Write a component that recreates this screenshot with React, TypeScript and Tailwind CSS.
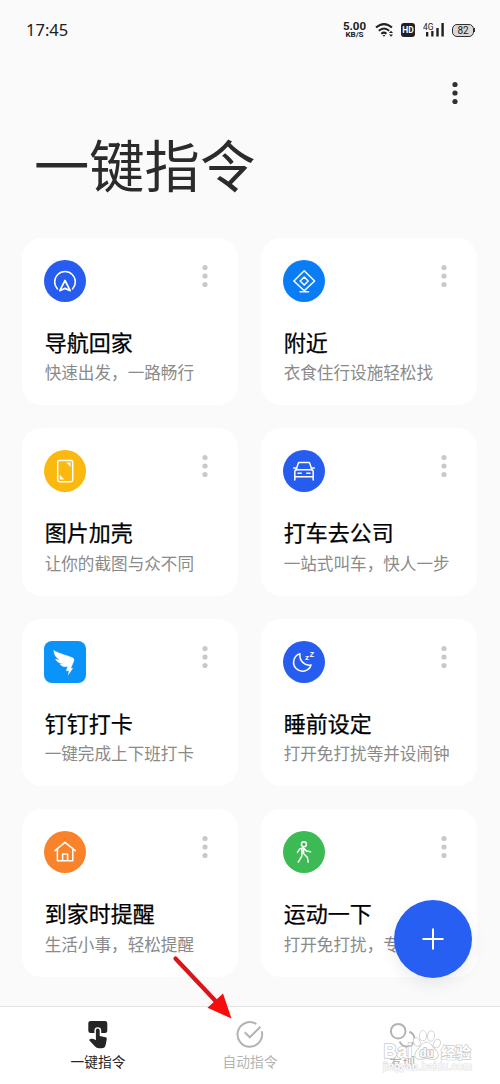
import clsx from 'clsx'
import { type FC, memo, type ReactNode } from 'react'

interface ICommand {
  readonly title: string
  readonly description: string
  readonly color: string
  readonly icon: ReactNode
}

const commands: ICommand[] = [
  {
    title: '导航回家',
    description: '快速出发，一路畅行',
    color: 'bg-[#275cf0] rounded-full',
    icon: (
      <>
        <path d="M13.5 28.9A10.3 10.3 0 1 1 28.5 28.9"/>
        <path d="M21 20.5L26.2 30.7L21 28.4L15.8 30.7Z" strokeWidth="1.7"/>
      </>
    )
  },
  {
    title: '附近',
    description: '衣食住行设施轻松找',
    color: 'bg-[#0a7cf5] rounded-full',
    icon: (
      <>
        <path d="M21.2 10.7L31.6 21L21.2 30.8L10.9 21Z"/>
        <path d="M21.2 17L25.2 21L21.2 25L17.2 21Z"/>
        <path d="M17 31.7H25.6"/>
      </>
    )
  },
  {
    title: '图片加壳',
    description: '让你的截图与众不同',
    color: 'bg-[#fbb80f] rounded-full',
    icon: (
      <>
        <rect x="13.7" y="10.5" width="15" height="21.2" rx="1.6"/>
        <path d="M22.8 12.8H26.4V16.5ZM16 25.5V29.2H19.6Z" fill="currentColor" strokeWidth="0.4"/>
      </>
    )
  },
  {
    title: '打车去公司',
    description: '一站式叫车，快人一步',
    color: 'bg-[#275cf0] rounded-full',
    icon: (
      <>
        <path d="M13.2 19.8L15.2 13.4Q15.5 12.6 16.4 12.6H25.6Q26.5 12.6 26.8 13.4L28.8 19.8"/>
        <path d="M10.6 17.9H13.4M28.6 17.9H31.4M11.8 30V21.4Q11.8 19.8 13.4 19.8H28.6Q30.2 19.8 30.2 21.4V30M11.8 26.8H30.2"/>
        <path d="M15 23.2H18.3M23.7 23.2H27"/>
      </>
    )
  },
  {
    title: '钉钉打卡',
    description: '一键完成上下班打卡',
    color: 'bg-[#0a94fa] rounded-[8px]',
    icon: (
      <path
        d="M9.8 9.6C15 12.8 22 13.8 28.2 16.6C30 17.4 30.4 18.6 29.8 20.2L26.8 27.2H28.8L24.2 34L25 29.8H22.2L23.6 25.6C20.5 26 17.8 25.6 15.8 22.9L19.4 22.8C15.5 22.2 12.9 21 11.4 18.2L16 18.9C12.2 17 9.9 14 9.8 9.6Z"
        fill="currentColor"
        strokeWidth="0.3"
      />
    )
  },
  {
    title: '睡前设定',
    description: '打开免打扰等并设闹钟',
    color: 'bg-[#275cf0] rounded-full',
    icon: (
      <>
        <path d="M17 12.8A8.9 8.9 0 1 0 28 24C21.7 25.3 16 19.5 17 12.8Z"/>
        <g fill="currentColor" stroke="none" fontFamily="Liberation Sans, sans-serif" fontWeight="700">
          <text x="22" y="19.4" fontSize="8">z</text>
          <text x="26.6" y="16.2" fontSize="7.6">Z</text>
        </g>
      </>
    )
  },
  {
    title: '到家时提醒',
    description: '生活小事，轻松提醒',
    color: 'bg-[#f8832b] rounded-full',
    icon: (
      <path d="M10.9 19.6L21 11.3L31.3 19.6M13.4 18V29.8H28.8V18M18.6 29.8V23H23.6V29.8"/>
    )
  },
  {
    title: '运动一下',
    description: '打开免打扰，专注运动',
    color: 'bg-[#3cba54] rounded-full',
    icon: (
      <>
        <circle cx="20.9" cy="13.2" r="2.5"/>
        <path d="M14.4 21.4L16.8 17.9L20.4 16.7L23.4 20L27.6 20.8M20.6 17V22.6L24.4 26.6L25.2 31.2M19 18.5L18.8 25.2L15.3 31"/>
      </>
    )
  }
]

const tabs = [ '一键指令', '自动指令', '发现' ]

const tabIcons: ReactNode[] = [
  <svg className="h-7 w-5" viewBox="0 0 20 28" fill="currentColor">
    <path d="M2.6 0H17A2.3 2.3 0 0 1 19.3 2.3V9.7A2.3 2.3 0 0 1 17 12H13.2V9.7A3.4 3.4 0 0 0 6.4 9.7V12H2.6A2.3 2.3 0 0 1 .3 9.7V2.3A2.3 2.3 0 0 1 2.6 0Z"/>
    <path d="M7.9 9.5A1.9 1.9 0 0 1 11.7 9.5V15.1L17.6 16.2Q19 16.5 18.8 17.9L17.7 23.8Q17 27.3 13.6 27.3H11Q8.6 27.3 6.8 25.3L1 19Q3.5 16.6 7.9 19.3Z"/>
  </svg>,
  <svg className="size-7" viewBox="0 0 28 28" fill="none" stroke="currentColor" strokeWidth="2">
    <path d="M20.3 3A12.3 12.3 0 1 0 25.7 10.2M8.7 11.2L13.8 16.3L24.5 5.8"/>
  </svg>,
  <svg className="h-7 w-7" viewBox="0 0 28 28" fill="none" stroke="currentColor" strokeWidth="2">
    <circle cx="10.2" cy="10.2" r="7.3"/>
    <path d="M21.3 10.7A7.6 7.6 0 1 1 11.7 20.5"/>
  </svg>
]

const StatusBar: FC = memo(() => (
  <header className="flex h-[60px] items-center justify-between pr-[25px] pl-[26px] text-[#202020]">
    <span className="pt-px font-['Noto_Sans'] text-[16.5px] leading-none">17:45</span>
    <div className="flex items-center">
      <div className="mr-[9px] flex w-[23px] flex-col items-center font-['Roboto'] font-bold">
        <span className="text-[11.5px] leading-[10px]">5.00</span>
        <span className="text-[8px] leading-[8px]">KB/S</span>
      </div>
      <svg className="mr-[7px] h-4 w-[19px]" viewBox="0 0 19 16" fill="none" stroke="currentColor" strokeWidth="2">
        <path d="M1 5.6Q9 -1.4 17 5.6M3.8 8.8Q9 4.2 14.2 8.8M6.3 11.7Q9 9.6 11.5 11.7"/>
        <path d="M7.6 13H10.4L9 14.8ZM14 11L16 8.8L18 11ZM14 12.5L16 14.7L18 12.5Z" fill="currentColor" stroke="none"/>
      </svg>
      <span className="mr-[8px] flex h-[14px] w-[14px] items-center justify-center rounded-[3px] bg-[#202020] font-['Roboto'] text-[8.5px] font-bold text-white">
        HD
      </span>
      <svg className="mr-[8px] h-4 w-[21px]" viewBox="0 0 21 16" fill="currentColor">
        <text x="0" y="7.8" fontSize="8.5" textLength="10.5" lengthAdjust="spacingAndGlyphs" fontFamily="Roboto, sans-serif">4G</text>
        <path d="M3 10H5.3V14.5H3ZM8.2 9H10.5V14.5H8.2ZM13.3 6H15.7V14.5H13.3ZM18.4 1H20.8V14.5H18.4Z"/>
      </svg>
      <div className="flex items-center">
        <span className="flex h-[13px] w-[22px] items-center justify-center rounded-[5px] border-[1.5px] border-[#303030] bg-[#d9d9d9] font-['Roboto'] text-[10px]">
          82
        </span>
        <span className="h-1 w-px bg-[#303030]"/>
      </div>
    </div>
  </header>
))

const MoreDots: FC<{ readonly className: string }> = ({ className }) => (
  <button className={className}>
    <svg className="h-6 w-1.5" viewBox="0 0 6 24" fill="currentColor">
      <circle cx="3" cy="3.5" r="2.6"/>
      <circle cx="3" cy="12" r="2.6"/>
      <circle cx="3" cy="20.5" r="2.6"/>
    </svg>
  </button>
)

const CommandCard: FC<ICommand> = memo((props) => (
  <article className="h-[167.5px] rounded-[20px] bg-white px-[22px] pt-[22px]">
    <div className="flex h-[42px] items-start justify-between">
      <span className={clsx('size-[42px] text-white', props.color)}>
        <svg
          className="size-full"
          viewBox="0 0 42 42"
          fill="none"
          stroke="currentColor"
          strokeWidth="1.5"
          strokeLinejoin="round"
          strokeLinecap="round"
        >
          {props.icon}
        </svg>
      </span>
      <MoreDots className="mt-1 mr-2 text-[#c9c9c9]"/>
    </div>
    <h2 className="mt-[23px] pl-[0.7px] text-[22px] leading-8 whitespace-nowrap text-black [-webkit-text-stroke:0.25px_black]">
      {props.title}
    </h2>
    <p className="mt-[3.5px] pl-[0.7px] text-[16.6px] leading-6 whitespace-nowrap text-[#8a8a8a]">{props.description}</p>
  </article>
))

const Watermark: FC = () => (
  <svg
    className="absolute top-[1024px] left-[380px] h-[54px] w-[100px]"
    viewBox="0 0 100 54"
    fill="#ffffff"
    stroke="#cbcbcb"
    strokeWidth="1.6"
    paintOrder="stroke"
    fontFamily="Liberation Sans, Noto Sans CJK SC, sans-serif"
    fontWeight="700"
  >
    <text x="3.5" y="34" fontSize="20" textLength="29" lengthAdjust="spacingAndGlyphs">Bai</text>
    <ellipse cx="36.8" cy="18" rx="2.9" ry="4.1" transform="rotate(-20 36.8 18)"/>
    <ellipse cx="43" cy="11.8" rx="3.1" ry="4.7"/>
    <ellipse cx="51" cy="12" rx="3.1" ry="4.7" transform="rotate(8 51 12)"/>
    <ellipse cx="57" cy="19.5" rx="2.9" ry="4.1" transform="rotate(20 57 19.5)"/>
    <path d="M46.5 18.5C51 18.5 52 23 55.5 26.3C59.5 30.3 58 35 53.5 35C50.5 35 49.5 34.3 46.5 34.3C43.5 34.3 42.3 35 39.5 35C35 35 33.5 30.3 37.5 26.3C41 23 42 18.5 46.5 18.5Z"/>
    <text x="39.5" y="32.5" fontSize="12.5" textLength="14" lengthAdjust="spacingAndGlyphs" stroke="#bcbcbc">du</text>
    <text x="61" y="34" fontSize="15" strokeWidth="1.4">经验</text>
    <text x="3" y="46" fontSize="10.5" fontWeight="400" textLength="89" strokeWidth="1" stroke="#dedede">jingyan.baidu.com</text>
  </svg>
)

const App: FC = () => (
  <div className="relative flex h-[1084px] w-[500px] flex-col overflow-hidden bg-[#fafafa] font-['Noto_Sans_CJK_SC',sans-serif]">
    <StatusBar/>
    <div className="flex h-[46px] justify-end pt-[21px] pr-[42px]">
      <MoreDots className="h-6 text-[#303030]"/>
    </div>
    <h1 className="mt-[25px] pl-[34px] text-[55.3px] leading-[64px] text-[#2b2b2b]">一键指令</h1>

    <main className="mt-[42.6px] grid grid-cols-2 gap-[23px] pr-[23px] pl-[22px]">
      {commands.map((command) => (
        <CommandCard key={command.title} {...command}/>
      ))}
    </main>

    <nav className="absolute inset-x-0 bottom-0 flex h-[78px] justify-around border-t border-[#e5e5e5] bg-white px-[22px]">
      {tabs.map((label, i) => (
        <button
          key={label}
          className={clsx('flex w-[152px] flex-col items-center pt-[14px]', i === 0 ? 'text-[#252525]' : 'text-[#b3b3b3]')}
        >
          {tabIcons[i]}
          <span className="mt-[2px] text-[13.7px] leading-5">{label}</span>
        </button>
      ))}
    </nav>

    <button className="absolute top-[900px] left-[394px] flex size-[78px] items-center justify-center rounded-full bg-[#275ff3] text-white shadow-[0_6px_16px_rgba(0,0,0,0.08)]">
      <svg className="size-[22px]" viewBox="0 0 22 22" stroke="currentColor" strokeWidth="2">
        <path d="M11 0.5V21.5M0.5 11H21.5"/>
      </svg>
    </button>

    <svg className="absolute top-[950px] left-[165px] h-[75px] w-[75px]" viewBox="0 0 75 75">
      <path d="M10.5 8.5L52 52.5" stroke="#dc1418" strokeWidth="4.2" strokeLinecap="round"/>
      <path d="M66.5 68.5L58 43.5L42.5 57.7Z" fill="#f80d0d"/>
    </svg>
    <Watermark/>
  </div>
)

export default App
